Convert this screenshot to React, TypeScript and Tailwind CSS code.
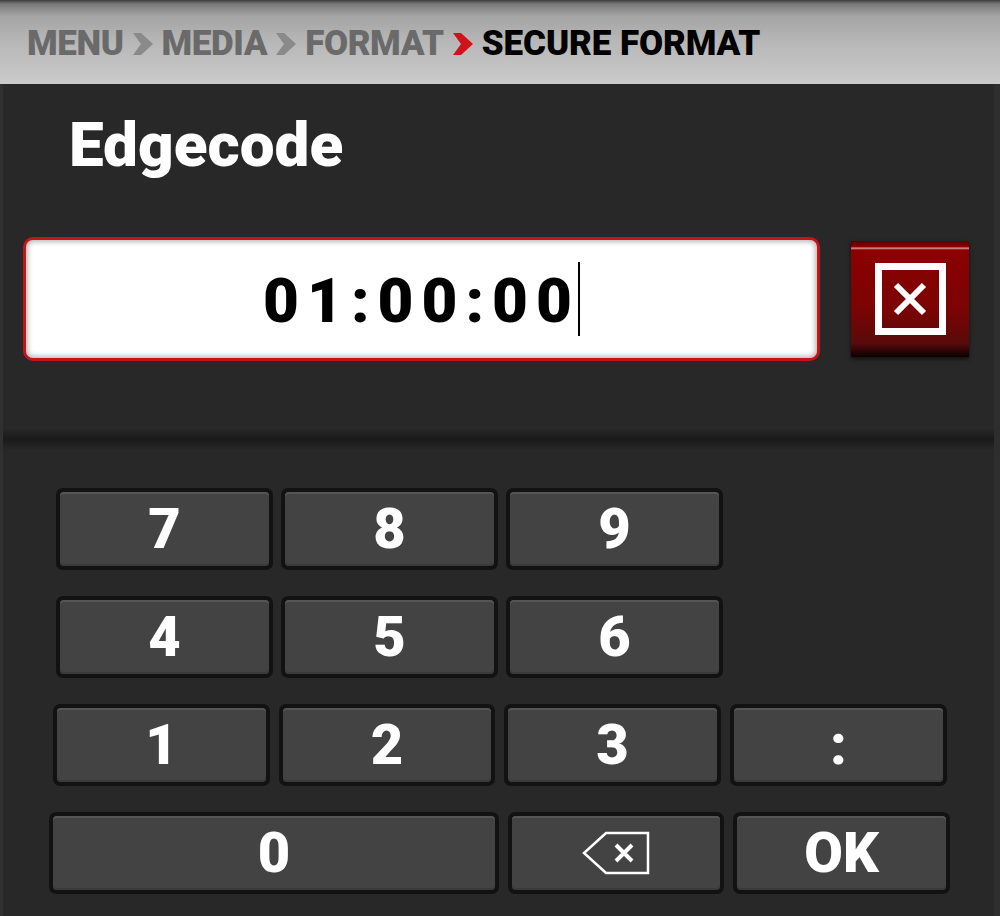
import React from "react";

const Chevron = ({ color }: { color: string }) => (
  <svg width="22" height="22" viewBox="0 0 22 22" className="ml-[8px] mr-[8px]">
    <polygon points="1,0 9,0 21,11 9,22 1,22 9,11" fill={color} />
  </svg>
);

const Key = ({ label, w, children }: { label?: string; w: string; children?: React.ReactNode }) => (
  <div className={`${w} h-[82px] rounded-[7px] bg-[#121212] p-[4px]`}>
    <div className="flex h-full w-full items-center justify-center rounded-[4px] bg-[#434343] shadow-[inset_0_2px_0_#555555,inset_0_-2px_0_#3a3a3a]">
      {children ?? (
        <span className="text-[56px] font-black leading-none text-white">{label}</span>
      )}
    </div>
  </div>
);

export default function App() {
  return (
    <div
      className="relative flex h-[916px] w-[1000px] flex-col overflow-hidden bg-[#282828]"
      style={{ fontFamily: "Roboto, 'Noto Sans', sans-serif" }}
    >
      {/* header */}
      <div className="flex h-[84px] items-center bg-[linear-gradient(to_bottom,#3c3c3c_0px,#7a7a7a_4px,#a4a4a4_16px,#b6b6b6_40px,#cbcbcb_84px)] pl-[27px] pt-[3px]">
        <span className="text-[35px] font-black leading-none tracking-[-0.4px] text-[#6a6a6a]">MENU</span>
        <Chevron color="#8a8a8a" />
        <span className="text-[35px] font-black leading-none tracking-[-0.4px] text-[#6a6a6a]">MEDIA</span>
        <Chevron color="#8a8a8a" />
        <span className="text-[35px] font-black leading-none tracking-[-0.4px] text-[#6a6a6a]">FORMAT</span>
        <Chevron color="#d0121b" />
        <span className="text-[35px] font-black leading-none tracking-[-0.1px] text-black">SECURE FORMAT</span>
      </div>

      {/* title */}
      <div className="mt-[30px] pl-[69px] text-[62px] font-black leading-none text-white">Edgecode</div>

      {/* input row */}
      <div className="mt-[61px] flex items-center pl-[23px]">
        <div className="flex h-[124px] w-[797px] items-center justify-center rounded-[10px] border-[3px] border-[#c4141a] bg-white shadow-[inset_0_0_5px_2px_rgba(0,0,0,0.28)]">
          <span className="mt-[4px] text-[62px] font-black leading-none tracking-[8px] text-black">01:00:00</span>
          <span className="ml-[-2px] h-[74px] w-[2px] bg-black" />
        </div>
        <div className="ml-[31px] flex h-[116px] w-[118px] items-center justify-center bg-[linear-gradient(to_bottom,#5a0000_0px,#8c0000_6px,#e3a0a0_7px,#8c0000_9px,#7a0404_60%,#5a0a0a_88%,#0a0000_100%)] shadow-[0_2px_4px_rgba(0,0,0,0.6)]">
          <div className="flex h-[72px] w-[71px] items-center justify-center border-[7px] border-white">
            <svg width="36" height="36" viewBox="0 0 36 36">
              <path d="M4 4 L32 32 M32 4 L4 32" stroke="white" strokeWidth="6" />
            </svg>
          </div>
        </div>
      </div>

      {/* separator band */}
      <div className="mt-[66px] h-[24px] bg-[linear-gradient(to_bottom,#2a2a2a_0%,#1a1a1a_50%,#292929_100%)]" />

      {/* keypad */}
      <div className="mt-[37px] flex flex-col gap-[26px]">
        <div className="ml-[56px] flex gap-[8px]">
          <Key w="w-[217px]" label="7" />
          <Key w="w-[217px]" label="8" />
          <Key w="w-[217px]" label="9" />
        </div>
        <div className="ml-[56px] flex gap-[8px]">
          <Key w="w-[217px]" label="4" />
          <Key w="w-[217px]" label="5" />
          <Key w="w-[217px]" label="6" />
        </div>
        <div className="ml-[53px] flex gap-[9px]">
          <Key w="w-[217px]" label="1" />
          <Key w="w-[216px]" label="2" />
          <Key w="w-[217px]" label="3" />
          <Key w="w-[217px]" label=":" />
        </div>
        <div className="ml-[49px] flex gap-[9px]">
          <Key w="w-[450px]" label="0" />
          <Key w="w-[216px]">
            <svg width="68" height="44" viewBox="0 0 68 44">
              <path d="M24 2 L66 2 L66 42 L24 42 L2 22 Z" fill="none" stroke="white" strokeWidth="2.5" strokeLinejoin="miter" />
              <path d="M34 14 L50 30 M50 14 L34 30" stroke="white" strokeWidth="4" />
            </svg>
          </Key>
          <Key w="w-[217px]" label="OK" />
        </div>
      </div>

      {/* side edges */}
      <div className="pointer-events-none absolute bottom-0 left-0 top-[84px] w-[3px] bg-[#303030]" />
      <div className="pointer-events-none absolute bottom-0 right-0 top-[84px] w-[6px] bg-[#2e2e2e]" />
    </div>
  );
}
